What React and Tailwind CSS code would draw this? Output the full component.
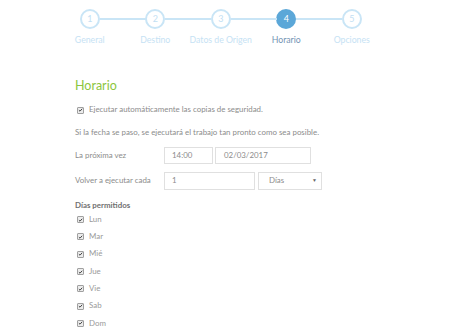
import { Fragment } from 'react'

const STEPS = [
  { n: 1, label: 'General' },
  { n: 2, label: 'Destino' },
  { n: 3, label: 'Datos de Origen' },
  { n: 4, label: 'Horario', active: true },
  { n: 5, label: 'Opciones' },
]

const DAYS = ['Lun', 'Mar', 'Mié', 'Jue', 'Vie', 'Sab', 'Dom']

function Check() {
  return (
    <span className="w-[7px] h-[7px] shrink-0 rounded-[1px] border border-[#a0a0a0] bg-[#ececec] flex items-center justify-center">
      <svg viewBox="0 0 8 8" className="w-[6px] h-[6px]">
        <path d="M1.4 4.2 L3.2 5.9 L6.7 2" fill="none" stroke="#3a3a3a" strokeWidth="1.5" />
      </svg>
    </span>
  )
}

function Stepper() {
  return (
    <div className="flex pl-[57px] pt-[9px]">
      {STEPS.map((s, i) => (
        <div key={s.n} className="w-[65.5px] flex flex-col items-center relative">
          {i > 0 && (
            <span className="absolute top-[9px] right-[42.5px] w-[46px] h-[2px] bg-[#c9e5f6]" />
          )}
          <span
            className={
              s.active
                ? 'w-[20px] h-[20px] rounded-full bg-[#5ba7d8] text-white text-[9px] flex items-center justify-center'
                : 'w-[20px] h-[20px] rounded-full border-2 border-[#c9e5f6] bg-white text-[#c2e0f3] text-[9px] flex items-center justify-center'
            }
          >
            {s.n}
          </span>
          <span
            className={
              'mt-[5px] text-[8.7px] leading-[11px] whitespace-nowrap ' +
              (s.active ? 'text-[#7393b4]' : 'text-[#c6e2f4]')
            }
          >
            {s.label}
          </span>
        </div>
      ))}
    </div>
  )
}

export default function App() {
  return (
    <div className="w-[450px] h-[336px] bg-white overflow-hidden font-['Lato','Open_Sans',sans-serif] text-[7.9px] text-[#8c8c8c]">
      <Stepper />
      <div className="pl-[75px] pt-[33px]">
        <h2 className="text-[12.5px] leading-[16px] text-[#8cc63e]">Horario</h2>

        <div className="mt-[10px] flex items-center gap-[5px] pl-[2px] h-[12px]">
          <Check />
          <span>Ejecutar automáticamente las copias de seguridad.</span>
        </div>
        <p className="mt-[10px] h-[12px] leading-[12px]">
          Si la fecha se paso, se ejecutará el trabajo tan pronto como sea posible.
        </p>

        <div className="mt-[9px] grid grid-cols-[89px_auto] gap-y-[8px] items-center">
          <span>La próxima vez</span>
          <div className="flex gap-[2px]">
            <div className="w-[49px] h-[17px] border border-[#e0e0e0] pl-[7px] flex items-center">14:00</div>
            <div className="w-[96px] h-[17px] border border-[#e0e0e0] pl-[8px] flex items-center">02/03/2017</div>
          </div>
          <span>Volver a ejecutar cada</span>
          <div className="flex gap-[3px]">
            <div className="w-[91px] h-[18px] border border-[#e0e0e0] pl-[7px] flex items-center">1</div>
            <div className="w-[64px] h-[18px] border border-[#e0e0e0] pl-[10px] pr-[4px] flex items-center justify-between">
              <span>Días</span>
              <span className="text-[5px] text-[#666]">▼</span>
            </div>
          </div>
        </div>

        <div className="mt-[9px] h-[12px] leading-[12px] font-bold text-[#707070]">Días permitidos</div>

        <div className="flex flex-col">
          {DAYS.map(d => (
            <Fragment key={d}>
              <div className="h-[17.3px] flex items-center gap-[5px] pl-[2px]">
                <Check />
                <span className="text-[#9a9a9a]">{d}</span>
              </div>
            </Fragment>
          ))}
        </div>
      </div>
    </div>
  )
}
